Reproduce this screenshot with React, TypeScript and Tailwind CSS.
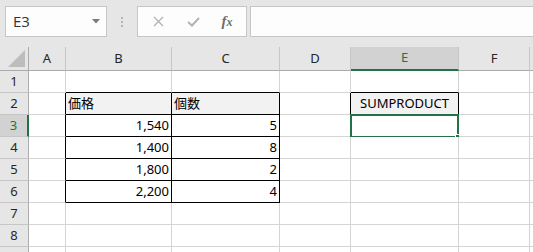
import React from "react";

const colWidths = ["A", "B", "C", "D", "E", "F", "G"];

type Cell = { text: string; align: "left" | "right" | "center"; bg?: boolean };

const data: Record<string, Cell> = {
  "2-1": { text: "価格", align: "left", bg: true },
  "2-2": { text: "個数", align: "left", bg: true },
  "2-4": { text: "SUMPRODUCT", align: "center", bg: true },
  "3-1": { text: "1,540", align: "right" },
  "3-2": { text: "5", align: "right" },
  "4-1": { text: "1,400", align: "right" },
  "4-2": { text: "8", align: "right" },
  "5-1": { text: "1,800", align: "right" },
  "5-2": { text: "2", align: "right" },
  "6-1": { text: "2,200", align: "right" },
  "6-2": { text: "4", align: "right" },
};

function inTable(r: number, c: number) {
  if (r >= 2 && r <= 6 && (c === 1 || c === 2)) return true;
  if (r === 2 && c === 4) return true;
  return false;
}

export default function App() {
  const rows = [1, 2, 3, 4, 5, 6, 7, 8, 9];
  return (
    <div className="w-[533px] h-[252px] overflow-hidden bg-[#e6e6e6] font-['Noto_Sans','Noto_Sans_CJK_JP',sans-serif]">
      {/* formula bar */}
      <div className="h-[47px] flex items-start pt-[6px] overflow-hidden">
        <div className="shrink-0 ml-[5px] w-[102px] h-[31px] bg-[#fdfdfd] border border-[#c6c6c6] flex items-center justify-between pl-[7px] pr-[6px]">
          <span className="text-[15px] text-[#333] leading-none font-['Open_Sans',sans-serif]">E3</span>
          <svg width="8" height="5" viewBox="0 0 8 5">
            <path d="M0 0 L8 0 L4 4.5 Z" fill="#7a7a7a" />
          </svg>
        </div>
        <div className="shrink-0 w-[30px] h-[31px] flex flex-col items-center justify-center gap-[2px]">
          <div className="w-[2px] h-[2px] bg-[#b5b5b5]" />
          <div className="w-[2px] h-[2px] bg-[#b5b5b5]" />
          <div className="w-[2px] h-[2px] bg-[#b5b5b5]" />
        </div>
        <div className="shrink-0 w-[110px] h-[31px] bg-[#fdfdfd] border border-[#c6c6c6] flex items-center">
          <div className="w-[40px] flex justify-center">
            <svg width="11" height="11" viewBox="0 0 11 11">
              <path d="M1 1 L10 10 M10 1 L1 10" stroke="#b3b3b3" strokeWidth="1.4" />
            </svg>
          </div>
          <div className="w-[30px] flex justify-center">
            <svg width="13" height="10" viewBox="0 0 13 10">
              <path d="M1 5 L5 8.5 L12 1" stroke="#b3b3b3" strokeWidth="2" fill="none" />
            </svg>
          </div>
          <div className="w-[38px] flex justify-center">
            <span className="font-['Liberation_Serif',serif] italic font-bold text-[#6e6e6e] text-[15px] leading-none">
              f<span className="text-[12px]">x</span>
            </span>
          </div>
        </div>
        <div className="shrink-0 ml-[3px] w-[300px] h-[31px] bg-[#fdfdfd] border border-[#c6c6c6]" />
      </div>

      {/* grid */}
      <div className="grid grid-cols-[29px_37px_106px_108px_71px_108px_71px_100px] grid-rows-[24px_repeat(9,22px)]">
        {/* corner */}
        <div className="border-r border-b border-r-[#ababab] border-b-[#ababab] bg-[#e6e6e6] flex items-end justify-end pr-[3px] pb-[3px]">
          <svg width="17" height="17" viewBox="0 0 17 17">
            <path d="M17 0 L17 17 L0 17 Z" fill="#bdbdbd" />
          </svg>
        </div>
        {colWidths.map((l, i) =>
          i === 4 ? (
            <div
              key={l}
              className="bg-[#d2d2d2] border-r border-r-[#c6c6c6] border-b-2 border-b-[#217346] flex items-center justify-center text-[13px] text-[#217346]"
            >
              {l}
            </div>
          ) : (
            <div
              key={l}
              className="bg-[#e6e6e6] border-r border-r-[#c6c6c6] border-b border-b-[#ababab] flex items-center justify-center text-[13px] text-[#262626]"
            >
              {i < 6 ? l : ""}
            </div>
          )
        )}
        {rows.map((r) => (
          <React.Fragment key={r}>
            {r === 3 ? (
              <div className="bg-[#d2d2d2] border-r-2 border-r-[#217346] border-b border-b-[#c6c6c6] flex items-center justify-center text-[13px] text-[#217346]">
                {r}
              </div>
            ) : (
              <div className="bg-[#e6e6e6] border-r border-r-[#ababab] border-b border-b-[#c6c6c6] flex items-center justify-center text-[13px] text-[#262626]">
                {r < 9 ? r : ""}
              </div>
            )}
            {colWidths.map((l, c) => {
              const cell = data[`${r}-${c}`];
              const rightBlack = inTable(r, c) || inTable(r, c + 1);
              const bottomBlack = inTable(r, c) || inTable(r + 1, c);
              const rc = rightBlack ? "border-r-black" : "border-r-[#d4d4d4]";
              const bc = bottomBlack ? "border-b-black" : "border-b-[#d4d4d4]";
              const bg = cell?.bg ? "bg-[#f2f2f2]" : "bg-white";
              const al =
                cell?.align === "right"
                  ? "justify-end pr-[2px]"
                  : cell?.align === "center"
                  ? "justify-center"
                  : "justify-start pl-[2px]";
              const selected = r === 3 && c === 4;
              return (
                <div
                  key={l}
                  className={`relative border-r border-b ${rc} ${bc} ${bg} flex items-center ${al} text-[13px] text-black leading-none`}
                >
                  {cell?.text}
                  {selected && (
                    <>
                      <div className="absolute -left-[1px] -top-[1px] -right-[1px] -bottom-[2px] border-2 border-[#217346]" />
                      <div className="absolute left-[104px] top-[19px] w-[7px] h-[7px] bg-[#217346] border border-white" />
                    </>
                  )}
                </div>
              );
            })}
          </React.Fragment>
        ))}
      </div>
    </div>
  );
}
